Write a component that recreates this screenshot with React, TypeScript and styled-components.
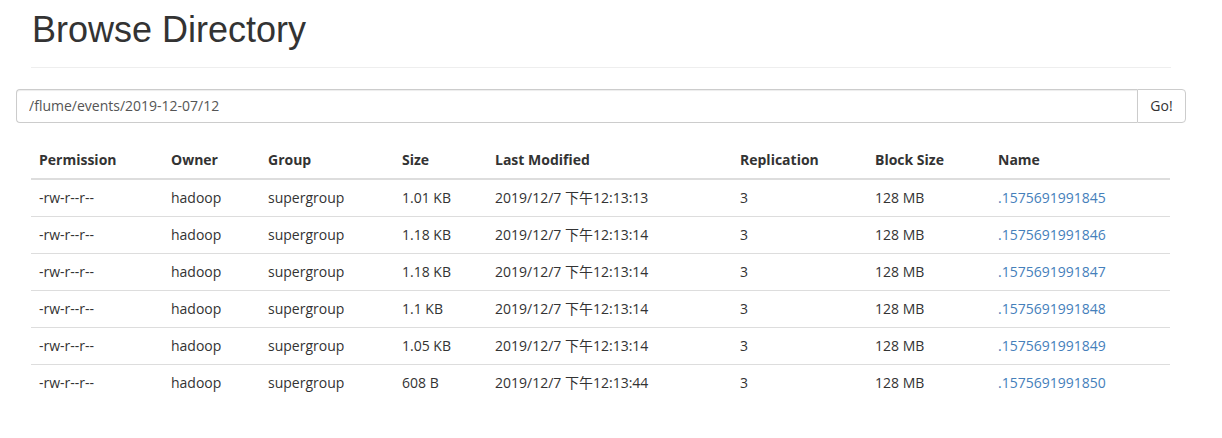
import React from "react";
import styled, { createGlobalStyle } from "styled-components";

const Global = createGlobalStyle`
  html, body { margin: 0; padding: 0; background: #fff; }
  body {
    font-family: "Open Sans", "Noto Sans", "Noto Sans CJK SC", sans-serif;
    font-size: 14px;
    line-height: 1.42857;
    color: #333;
  }
  * { box-sizing: border-box; }
`;

const Page = styled.div`
  padding: 0 36px 0 16px;
  width: 1222px;
`;

const Header = styled.div`
  margin: 10px 15px 21px 15px;
  padding-bottom: 17px;
  border-bottom: 1px solid #eee;
`;

const Title = styled.h1`
  margin: 0;
  font-family: "Liberation Sans", Arial, sans-serif;
  font-size: 36px;
  font-weight: 500;
  line-height: 1.1;
  color: #333;
  padding-left: 1px;
`;

const InputGroup = styled.div`
  display: flex;
  width: 1170px;
  height: 34px;
`;

const PathInput = styled.input`
  flex: 1;
  height: 34px;
  padding: 6px 12px;
  font: inherit;
  color: #555;
  border: 1px solid #ccc;
  border-right: none;
  border-radius: 4px 0 0 4px;
  box-shadow: inset 0 1px 1px rgba(0, 0, 0, 0.075);
  outline: none;
`;

const GoButton = styled.button`
  width: 49px;
  height: 34px;
  font: inherit;
  color: #333;
  background: #fff;
  border: 1px solid #ccc;
  border-radius: 0 4px 4px 0;
  padding: 6px 10px;
`;

const Table = styled.table`
  margin: 19px 0 0 15px;
  width: 1139px;
  border-collapse: collapse;
  border-spacing: 0;
`;

const Th = styled.th`
  text-align: left;
  font-weight: 700;
  padding: 8px;
  line-height: 20px;
  border-bottom: 2px solid #ddd;
  vertical-align: bottom;
`;

const Td = styled.td`
  padding: 8px;
  line-height: 20px;
  border-top: 1px solid #ddd;
  vertical-align: top;
`;

const FirstRowTd = styled(Td)`
  border-top: none;
`;

const Link = styled.a`
  color: #4580bb;
  text-decoration: none;
`;

const widths = [132, 97, 134, 93, 245, 135, 123, 180];
const headers = ["Permission", "Owner", "Group", "Size", "Last Modified", "Replication", "Block Size", "Name"];

const rows = [
  ["1.01 KB", "2019/12/7 下午12:13:13", ".1575691991845"],
  ["1.18 KB", "2019/12/7 下午12:13:14", ".1575691991846"],
  ["1.18 KB", "2019/12/7 下午12:13:14", ".1575691991847"],
  ["1.1 KB", "2019/12/7 下午12:13:14", ".1575691991848"],
  ["1.05 KB", "2019/12/7 下午12:13:14", ".1575691991849"],
  ["608 B", "2019/12/7 下午12:13:44", ".1575691991850"],
];

export default function App() {
  return (
    <>
      <Global />
      <Page>
        <Header>
          <Title>Browse Directory</Title>
        </Header>
        <InputGroup>
          <PathInput defaultValue="/flume/events/2019-12-07/12" />
          <GoButton>Go!</GoButton>
        </InputGroup>
        <Table>
          <colgroup>
            {widths.map((w, i) => (
              <col key={i} style={{ width: w }} />
            ))}
          </colgroup>
          <thead>
            <tr>
              {headers.map((h) => (
                <Th key={h}>{h}</Th>
              ))}
            </tr>
          </thead>
          <tbody>
            {rows.map((r, i) => {
              const C = i === 0 ? FirstRowTd : Td;
              return (
                <tr key={i}>
                  <C>-rw-r--r--</C>
                  <C>hadoop</C>
                  <C>supergroup</C>
                  <C>{r[0]}</C>
                  <C>{r[1]}</C>
                  <C>3</C>
                  <C>128 MB</C>
                  <C>
                    <Link href="#">{r[2]}</Link>
                  </C>
                </tr>
              );
            })}
          </tbody>
        </Table>
      </Page>
    </>
  );
}
